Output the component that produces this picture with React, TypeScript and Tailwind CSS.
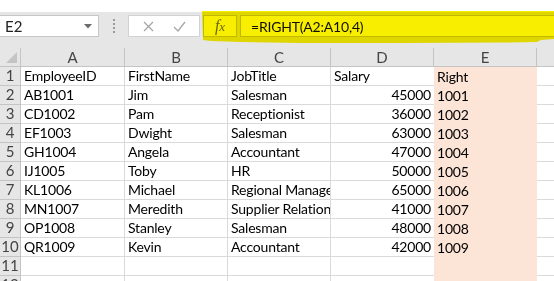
import React from "react";

const cols = ["A", "B", "C", "D", "E"];

const rows: [string, string, string, string, string][] = [
  ["EmployeeID", "FirstName", "JobTitle", "Salary", "Right"],
  ["AB1001", "Jim", "Salesman", "45000", "1001"],
  ["CD1002", "Pam", "Receptionist", "36000", "1002"],
  ["EF1003", "Dwight", "Salesman", "63000", "1003"],
  ["GH1004", "Angela", "Accountant", "47000", "1004"],
  ["IJ1005", "Toby", "HR", "50000", "1005"],
  ["KL1006", "Michael", "Regional Manager", "65000", "1006"],
  ["MN1007", "Meredith", "Supplier Relations", "41000", "1007"],
  ["OP1008", "Stanley", "Salesman", "48000", "1008"],
  ["QR1009", "Kevin", "Accountant", "42000", "1009"],
  ["", "", "", "", ""],
  ["", "", "", "", ""],
];

const gridCols = "grid grid-cols-[21px_104px_103px_103px_103px_103px_1fr]";
const cell = "flex items-end pb-[2px] border-b border-[#dadada] overflow-hidden whitespace-nowrap";

function FormulaBar() {
  return (
    <div className="relative h-[36px] bg-[#e6e6e6] flex items-start pt-[3px]">
      {/* name box */}
      <div className="-ml-px w-[100px] h-[22px] bg-white border border-[#c6c6c6] flex items-center justify-between pl-[5px] pr-[6px] text-[15px] text-[#222]">
        <span>E2</span>
        <svg width="8" height="5" viewBox="0 0 8 5">
          <path d="M0 0 L8 0 L4 4.5 Z" fill="#6b6b6b" />
        </svg>
      </div>
      {/* grip dots */}
      <div className="w-[29px] h-[22px] flex flex-col items-center justify-center gap-[2px]">
        <span className="w-[2px] h-[2px] bg-[#9a9a9a]" />
        <span className="w-[2px] h-[2px] bg-[#9a9a9a]" />
        <span className="w-[2px] h-[2px] bg-[#9a9a9a]" />
        <span className="w-[2px] h-[2px] bg-[#9a9a9a]" />
      </div>
      {/* cancel / enter */}
      <div className="w-[72px] h-[22px] bg-white border border-[#d2d2d2] flex items-center justify-around px-[4px]">
        <svg width="11" height="11" viewBox="0 0 11 11">
          <path d="M1 1 L10 10 M10 1 L1 10" stroke="#a6a6a6" strokeWidth="1.3" />
        </svg>
        <svg width="13" height="11" viewBox="0 0 13 11">
          <path d="M1 6 L5 10 L12 1" stroke="#a6a6a6" strokeWidth="1.3" fill="none" />
        </svg>
      </div>
      {/* fx */}
      <div className="ml-[3px] w-[34px] h-[22px] bg-white border border-[#c6c6c6] flex items-center justify-center">
        <span className="font-['Liberation_Serif',serif] italic text-[16px] text-[#6e6e6e] leading-none">
          f<span className="text-[13px]">x</span>
        </span>
      </div>
      {/* formula input */}
      <div className="ml-[3px] flex-1 h-[22px] bg-white border border-[#c6c6c6] border-r-0 flex items-center pl-[10px] text-[14px] tracking-[-0.2px] text-[#111]">
        =RIGHT(A2:A10,4)
      </div>
      {/* highlighter stroke */}
      <svg
        className="absolute left-[201px] top-[-1px] mix-blend-multiply pointer-events-none"
        width="353"
        height="34"
        viewBox="0 0 353 34"
      >
        <path
          d="M1 0 L353 0 L353 28 L340 29 L336 31 L300 31.5 L200 32 L100 32 L40 31 L10 30 L2 29 Z"
          fill="#f8ee00"
        />
      </svg>
    </div>
  );
}

function HeaderRow() {
  return (
    <div className={`${gridCols} h-[19px] bg-[#e6e6e6] text-[#444]`}>
      <div className="relative border-r border-b border-[#c4c4c4]">
        <svg className="absolute right-[3px] bottom-[3px]" width="11" height="11" viewBox="0 0 11 11">
          <path d="M11 0 L11 11 L0 11 Z" fill="#c4c4c4" />
        </svg>
      </div>
      {cols.map((c) => (
        <div key={c} className="flex items-center justify-center border-r border-b border-[#c4c4c4] leading-none">
          {c}
        </div>
      ))}
      <div className="border-b border-[#c4c4c4]" />
    </div>
  );
}

export default function App() {
  return (
    <div className="w-[554px] h-[281px] overflow-hidden bg-white font-['Lato','Noto_Sans',sans-serif] text-[15px]">
      <div className="h-[12px] bg-white" />
      <FormulaBar />
      <HeaderRow />
      {rows.map((r, i) => (
        <div key={i} className={`${gridCols} h-[19px] text-black leading-none text-[14px] tracking-[-0.2px]`}>
          <div className="flex items-end pb-[2px] justify-center bg-[#e6e6e6] border-r border-b border-[#c4c4c4] text-[#444] text-[15px] tracking-normal">
            {i + 1}
          </div>
          <div className={`${cell} pl-[3px] border-r`}>{r[0]}</div>
          <div className={`${cell} pl-[3px] border-r`}>{r[1]}</div>
          <div className={`${cell} pl-[3px] border-r`}>{r[2]}</div>
          <div className={`${cell} ${i === 0 ? "pl-[3px]" : "justify-end pr-[3px]"}`}>{r[3]}</div>
          <div className="flex items-end pb-[2px] pl-[3px] bg-[#fce4d6] overflow-hidden whitespace-nowrap">
            {r[4]}
          </div>
          <div className="border-b border-[#dadada]" />
        </div>
      ))}
    </div>
  );
}
